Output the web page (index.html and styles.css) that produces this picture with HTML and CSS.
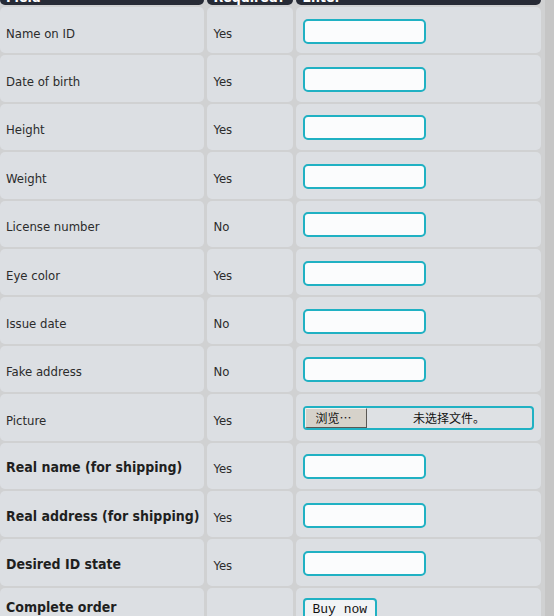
FILE: index.html
```html
<!DOCTYPE html>
<html lang="en">
<head>
    <meta charset="UTF-8">
    <meta name="viewport" content="width=device-width, initial-scale=1.0">
    <title>Order</title>
    <link rel="stylesheet" href="styles.css">
</head>
<body>
    <div class="page">
        <table class="order">
            <colgroup>
                <col class="c-field">
                <col class="c-req">
                <col class="c-enter">
            </colgroup>
            <tr class="head"><th>Field</th><th>Required?</th><th>Enter</th></tr>
            <tr><td>Name on ID</td><td>Yes</td><td class="enter"><input type="text"></td></tr>
            <tr><td>Date of birth</td><td>Yes</td><td class="enter"><input type="text"></td></tr>
            <tr><td>Height</td><td>Yes</td><td class="enter"><input type="text"></td></tr>
            <tr><td>Weight</td><td>Yes</td><td class="enter"><input type="text"></td></tr>
            <tr><td>License number</td><td>No</td><td class="enter"><input type="text"></td></tr>
            <tr><td>Eye color</td><td>Yes</td><td class="enter"><input type="text"></td></tr>
            <tr><td>Issue date</td><td>No</td><td class="enter"><input type="text"></td></tr>
            <tr><td>Fake address</td><td>No</td><td class="enter"><input type="text"></td></tr>
            <tr>
                <td>Picture</td><td>Yes</td>
                <td class="enter">
                    <label class="file"><span class="browse">浏览…</span><span class="fname">未选择文件。</span></label>
                </td>
            </tr>
            <tr class="ship"><td>Real name (for shipping)</td><td>Yes</td><td class="enter"><input type="text"></td></tr>
            <tr class="ship"><td>Real address (for shipping)</td><td>Yes</td><td class="enter"><input type="text"></td></tr>
            <tr class="ship"><td>Desired ID state</td><td>Yes</td><td class="enter"><input type="text"></td></tr>
            <tr class="ship last"><td>Complete order</td><td></td><td class="enter"><button class="buy">Buy now</button></td></tr>
        </table>
    </div>
</body>
</html>
```

FILE: styles.css
```css
body {
    margin: 0;
    background: #c6c6c6;
    font-family: "DejaVu Sans Condensed", "DejaVu Sans", sans-serif;
    font-stretch: condensed;
    color: #2b2b2b;
    height: 616px;
    overflow: hidden;
}
.page {
    width: 545px;
    height: 616px;
    background: #d0d1d2;
    overflow: hidden;
}
.order {
    table-layout: fixed;
    width: 547px;
    border-collapse: separate;
    border-spacing: 3px 2px;
    margin: -19px 0 0 -3px;
}
.c-field { width: 203.5px; }
.c-req { width: 86px; }
.c-enter { width: 245.5px; }

.head { height: 22px; }
.head th {
    background: #272b36;
    color: #fff;
    font-size: 14px;
    font-weight: bold;
    text-align: left;
    vertical-align: bottom;
    line-height: 16px;
    padding: 0 6px;
    border-radius: 0 0 5px 5px;
}
.head th:nth-child(2) { padding-left: 7px; }
.head th:nth-child(3) { padding-left: 7px; }

tr { height: 46.4px; }
td {
    background: #dcdfe3;
    border-radius: 5px;
    font-size: 13px;
    line-height: 15px;
    padding: 6px 6px 0;
    vertical-align: middle;
    white-space: nowrap;
}
td:nth-child(2) { padding-left: 7px; }
td.enter { padding: 2px 7px 0; }

.ship td:first-child {
    font-size: 14px;
    font-weight: bold;
    color: #1f1f1f;
    padding-top: 4px;
}
.last td { vertical-align: top; }
.ship.last td:first-child { padding-top: 12px; }
.last td.enter { padding-top: 0; }

input {
    display: block;
    box-sizing: border-box;
    width: 123px;
    height: 25px;
    margin: 0;
    padding: 0 4px;
    border: 2px solid #20b1c3;
    border-radius: 5px;
    background: #fbfcfd;
}

.file {
    display: flex;
    box-sizing: border-box;
    width: 231px;
    height: 24px;
    border: 2px solid #20b1c3;
    border-radius: 4px;
    background: #dee1e4;
    font-family: "Noto Sans CJK SC", sans-serif;
    font-size: 12px;
    color: #111;
    overflow: hidden;
}
.browse {
    box-sizing: border-box;
    width: 62px;
    padding-left: 10px;
    line-height: 18px;
    background: #d6d2ca;
    border: 1px solid;
    border-color: #f4f2ee #5a5854 #5a5854 #f4f2ee;
}
.fname {
    flex: 1;
    text-align: center;
    line-height: 19px;
}

.buy {
    display: block;
    margin-top: 10px;
    height: 24px;
    padding: 0 8px;
    border: 2px solid #20b1c3;
    border-radius: 4px;
    background: #f1f3f5;
    font-family: "Liberation Mono", monospace;
    font-size: 13px;
    color: #111;
}
```
